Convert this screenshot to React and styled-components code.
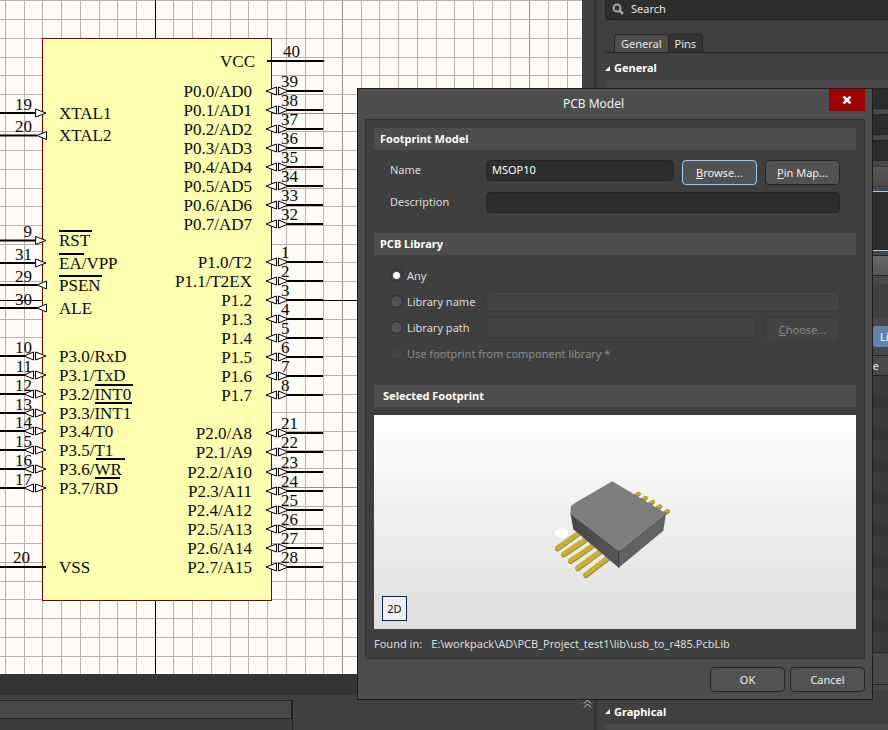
import React from "react";
import styled, { createGlobalStyle, css } from "styled-components";

const Global = createGlobalStyle`
  *, *::before, *::after { box-sizing: border-box; }
  body { margin: 0; background: #404040; }
  body, button, input { font-family: "Noto Sans", "Open Sans", sans-serif; font-size: 11px; line-height: 16px; color: #e6e6e6; }
`;

/* ---------- application frame ---------- */

const Frame = styled.div`
  position: relative;
  display: grid;
  grid-template-columns: minmax(0, 1fr) 12px 294px;
  height: 100vh;
  overflow: hidden;
  background: #404040;
`;

const Workspace = styled.main`
  display: flex;
  flex-direction: column;
  min-width: 0;
  min-height: 0;
`;

const Sheet = styled.svg`
  flex: 1;
  min-height: 0;
  width: 100%;
  display: block;
  background: #fffcf7;
`;

const StatusStrip = styled.div`
  flex: none;
  height: 21px;
  background: #343434;
`;

const DockArea = styled.div`
  flex: none;
  padding-top: 5px;
  height: 35px;
`;

const DockPanel = styled.div`
  width: 293px;
  height: 100%;
  border-right: 1px solid #222;
  background: #3c3c3c;
`;

const DockHeader = styled.div`
  height: 19px;
  border: 1px solid #222;
  border-left: 0;
  background: #484848;
`;

const Gutter = styled.div`
  display: flex;
  flex-direction: column;
  justify-content: flex-end;
  align-items: flex-start;
  padding-bottom: 21px;
`;

const Expand = styled.button`
  display: flex;
  width: 11px;
  height: 11px;
  padding: 1px;
  border: 0;
  background: none;
`;

/* ---------- properties panel ---------- */

const Side = styled.aside`
  display: flex;
  flex-direction: column;
  border-left: 3px solid #353535;
  padding-left: 8px;
  overflow: hidden;
`;

const SearchBox = styled.label`
  flex: none;
  display: flex;
  align-items: center;
  gap: 7px;
  height: 20px;
  padding: 0 6px 2px;
  border: 1px solid #222;
  border-width: 0 0 1px 1px;
  border-radius: 0 0 0 4px;
  background: #2d2d2d;
`;

const SearchInput = styled.input`
  flex: 1;
  min-width: 0;
  padding: 0;
  border: 0;
  background: none;
  outline: 0;
  &::placeholder { color: #e6e6e6; opacity: 1; }
`;

const Tabs = styled.div`
  flex: none;
  display: flex;
  margin-top: 14px;
  padding-left: 9px;
  border-bottom: 1px solid #252525;
`;

const Tab = styled.button`
  height: 18px;
  padding: 0 6px;
  border: 1px solid #252525;
  border-bottom: 0;
  border-radius: 4px 4px 0 0;
  background: ${(p) => (p.$active ? "#4d4d4d" : "#343434")};
  & + & { margin-left: -1px; }
`;

const GroupTitle = styled.h2`
  flex: none;
  display: flex;
  align-items: center;
  gap: 4px;
  height: ${(p) => p.$height}px;
  margin: 0;
  padding-top: ${(p) => p.$top || 0}px;
  font-size: 11px;
  font-weight: 700;
  color: #fff;
`;

const GroupBody = styled.div`
  flex: none;
  display: flex;
  flex-direction: column;
  background: #484848;
  border-radius: 4px 0 0 0;
`;

const Fields = styled.div`
  display: flex;
  flex-direction: column;
  gap: 5px;
  padding: 8px 0;
`;

const well = css`
  border: 1px solid #252525;
  background: #2d2d2d;
  outline: 0;
`;

const SideInput = styled.input`
  ${well}
  border-right: 0;
  height: 21px;
  width: 100%;
`;

const SideButton = styled.button`
  height: 21px;
  border: 1px solid ${(p) => (p.$raised ? "#252525" : "#383838")};
  border-right: 0;
  background: linear-gradient(${(p) => (p.$raised ? "#686868, #555" : "#565656, #4c4c4c")});
`;

const SideNote = styled.textarea`
  display: block;
  height: 60px;
  margin: -1px 0;
  border: 1px solid #9ccaff;
  border-right: 0;
  background: #2d2d2d;
  resize: none;
  outline: 0;
`;

const SideGap = styled.div`
  height: 33px;
  background: #404040;
`;

const Actions = styled.div`
  display: flex;
  justify-content: flex-end;
  padding: 9px 0 8px;
`;

const LibraryButton = styled.button`
  flex: 0 0 16px;
  height: 21px;
  padding: 0 0 0 8px;
  border: 0;
  border-radius: 4px 0 0 4px;
  background: #5f83aa;
  color: #fff;
  overflow: hidden;
  text-align: left;
`;

const ModelTable = styled.table`
  width: 100%;
  border-spacing: 0;
  th {
    height: 21px;
    padding: 0 9px 0 0;
    border: solid #222;
    border-width: 1px 0;
    font-weight: 400;
    text-align: right;
  }
  td { height: 20px; padding: 0; background: #3b3b3b; }
  tr:nth-child(even) td { background: #343434; height: 12px; }
`;

const TableFooter = styled.div`
  height: 33px;
  margin-bottom: 6px;
  border: solid #222;
  border-width: 1px 0;
`;

/* ---------- dialog ---------- */

const Dialog = styled.section`
  position: absolute;
  top: 88px;
  right: 15px;
  width: min(516px, calc(100% - 30px));
  border: 1px solid #1d1d1d;
  background: #4d4d4d;
`;

const TitleBar = styled.header`
  display: grid;
  grid-template-columns: 1fr 36px;
  height: 30px;
  padding-right: 7px;
`;

const Title = styled.h1`
  margin: 0;
  font-size: 12px;
  font-weight: 400;
  line-height: 30px;
  text-align: center;
  color: #f0f0f0;
`;

const CloseButton = styled.button`
  display: flex;
  align-items: center;
  justify-content: center;
  height: 22px;
  padding: 0;
  border: 0;
  background: #a00000;
`;

const Content = styled.div`
  margin: 0 7px;
  padding: 8px 8px 6px;
  border: 1px solid #323232;
  background: #3f3f3f;
`;

const SectionTitle = styled.h2`
  margin: 0;
  padding: 0 ${(p) => (p.$indent ? 9 : 6)}px;
  background: #4d4d4d;
  font-size: 11px;
  font-weight: 700;
  line-height: 22px;
  color: #fff;
`;

const Form = styled.div`
  display: flex;
  flex-direction: column;
  gap: ${(p) => p.$gap}px;
  padding: 10px 16px ${(p) => p.$bottom}px;
`;

const Row = styled.div`
  display: flex;
  gap: 8px;
  height: ${(p) => p.$height || 21}px;
`;

const Caption = styled.label`
  flex: none;
  display: flex;
  align-items: center;
  gap: 4px;
  width: ${(p) => (p.$wide ? "auto" : "88px")};
  height: ${(p) => (p.$field ? 19 : 21)}px;
  color: ${(p) => (p.$disabled ? "#8d8d8d" : "#dcdcdc")};
  white-space: nowrap;
`;

const TextField = styled.input`
  ${well}
  flex: 1;
  min-width: 0;
  height: 21px;
  padding: 0 5px 2px;
  border-radius: 4px;
  color: #fff;
  &:disabled { background: #434343; border-color: #393939; }
`;

const Radio = styled.input`
  appearance: none;
  width: 13px;
  height: 13px;
  margin: 0;
  border: 1px solid #2a2a2a;
  border-radius: 50%;
  background: #525252;
  &:checked { background: radial-gradient(circle, #fff 0 3px, #4a4a4a 4px); }
  &:disabled { background: #434343; border-color: #3c3c3c; }
`;

const Button = styled.button`
  flex: none;
  width: 75px;
  height: 25px;
  padding: 0;
  border: 1px solid ${(p) => (p.$focus ? "#9ccaff" : "#252525")};
  border-radius: 4px;
  background: #525252;
  color: #f0f0f0;
  &:disabled { background: #434343; border-color: #3b3b3b; color: #888; }
`;

const Preview = styled.div`
  position: relative;
  margin-top: 8px;
  background: linear-gradient(#fff, #dedede);
`;

const Model = styled.svg`
  display: block;
  width: 100%;
`;

const ViewToggle = styled.button`
  position: absolute;
  left: 8px;
  bottom: 8px;
  width: 25px;
  height: 25px;
  padding: 0;
  border: 1px solid #0a246a;
  background: #f0f0f0;
  color: #111;
`;

const FoundIn = styled.p`
  display: flex;
  gap: 9px;
  margin: 7px 0 0;
  color: #dcdcdc;
`;

const Footer = styled.footer`
  display: flex;
  justify-content: flex-end;
  gap: 5px;
  padding: 8px 7px 7px;
`;

/* ---------- schematic ---------- */

const PinText = styled.text`
  font-family: "Liberation Serif", serif;
  font-size: 17px;
  fill: #0a0a0a;
  text-anchor: ${(p) => p.$anchor || "start"};
`;

const PITCH = 18.72;
const columns = Array.from({ length: 60 }, (_, k) => ({ at: Math.floor(5.5 + PITCH * k) + 0.5, major: k % 10 === 8 }));
const rows = Array.from({ length: 37 }, (_, k) => ({ at: Math.floor(0.9 + PITCH * k) + 0.5, major: k % 10 === 6 }));

const bus = (names, numbers, start, step) =>
  names.map((name, i) => ({ name, number: numbers[i], y: Math.round(start + step * i) }));

const rightPins = [
  ...bus(["P0.0/AD0", "P0.1/AD1", "P0.2/AD2", "P0.3/AD3", "P0.4/AD4", "P0.5/AD5", "P0.6/AD6", "P0.7/AD7"], [39, 38, 37, 36, 35, 34, 33, 32], 91, 19.05),
  ...bus(["P1.0/T2", "P1.1/T2EX", "P1.2", "P1.3", "P1.4", "P1.5", "P1.6", "P1.7"], [1, 2, 3, 4, 5, 6, 7, 8], 262, 19.05),
  ...bus(["P2.0/A8", "P2.1/A9", "P2.2/A10", "P2.3/A11", "P2.4/A12", "P2.5/A13", "P2.6/A14", "P2.7/A15"], [21, 22, 23, 24, 25, 26, 27, 28], 433.4, 19.05),
];

const leftPins = [
  { name: "XTAL1", number: 19, y: 113, kind: "in" },
  { name: "XTAL2", number: 20, y: 135.5, kind: "out" },
  { name: "RST", number: 9, y: 240.5, kind: "in", bar: [59, 92, 231] },
  { name: "EA/VPP", number: 31, y: 263, kind: "in", bar: [59, 84, 254] },
  { name: "PSEN", number: 29, y: 285, kind: "out", bar: [59, 102, 276] },
  { name: "ALE", number: 30, y: 308, kind: "out" },
  ...bus(
    ["P3.0/RxD", "P3.1/TxD", "P3.2/INT0", "P3.3/INT1", "P3.4/T0", "P3.5/T1", "P3.6/WR", "P3.7/RD"],
    [10, 11, 12, 13, 14, 15, 16, 17], 356.4, 18.75
  ).map((p, i) => ({ ...p, kind: "io", bar: { 2: [95, 133, 385], 3: [95, 132, 403], 6: [96, 125, 459], 7: [95, 120, 478] }[i] })),
];

const Arrow = ({ tip, base, y }) => (
  <path d={`M${tip} ${y}L${base} ${y - 4}V${y + 4}Z`} fill="#fffcf7" stroke="#000" />
);

function Schematic() {
  return (
    <Sheet viewBox="0 0 582 674" preserveAspectRatio="xMinYMin slice" role="img" aria-label="Schematic symbol">
      <g strokeWidth="1">
        {columns.map((c) => <path key={c.at} d={`M${c.at} 0V674`} stroke={c.major ? "#9b8f87" : "#bdb0a9"} />)}
        {rows.map((r) => <path key={r.at} d={`M0 ${r.at}H1200`} stroke={r.major ? "#9b8f87" : "#bdb0a9"} />)}
        <path d="M155.5 0V674M0 300.5H582" stroke="#000" />
      </g>
      <rect x="42.5" y="38.5" width="229" height="562" fill="#ffffb0" stroke="#800000" />
      <path d="M267 61H324M0 567H46" stroke="#000" strokeWidth="2" />
      <PinText x="255" y="67" $anchor="end">VCC</PinText>
      <PinText x="283" y="57">40</PinText>
      <PinText x="59" y="573">VSS</PinText>
      <PinText x="13" y="563">20</PinText>
      {rightPins.map((p) => (
        <g key={p.name}>
          <path d={`M287 ${p.y}H323`} stroke="#000" strokeWidth="2" />
          <Arrow tip={266} base={276.5} y={p.y} />
          <Arrow tip={288} base={278.5} y={p.y} />
          <PinText x="252" y={p.y + 6} $anchor="end">{p.name}</PinText>
          <PinText x="281" y={p.y - 4}>{p.number}</PinText>
        </g>
      ))}
      {leftPins.map((p) => (
        <g key={p.name}>
          <path d={`M0 ${p.y}H${p.kind === "io" ? 25 : 37}`} stroke="#000" strokeWidth="2" />
          {p.kind === "io" && <Arrow tip={24} base={33.5} y={p.y} />}
          {p.kind === "out" ? <Arrow tip={37} base={46.5} y={p.y} /> : <Arrow tip={46} base={35.5} y={p.y} />}
          <PinText x="59" y={Math.floor(p.y) + 6}>{p.name}</PinText>
          <PinText x="32" y={Math.floor(p.y) - 3} $anchor="end">{p.number}</PinText>
          {p.bar && <path d={`M${p.bar[0]} ${p.bar[2]}H${p.bar[1]}`} stroke="#000" strokeWidth="2" />}
        </g>
      ))}
    </Sheet>
  );
}

function Chip() {
  const front = [[82, 267, 142, 224], [100, 285, 164, 242], [121, 305, 186, 260], [143, 326, 208, 278], [167, 347, 234, 295]];
  const back = [[324, 102], [345, 114], [367, 126], [388, 140], [411, 154]];
  return (
    <Model viewBox="0 0 482 214" role="img" aria-label="MSOP10 package">
      <defs>
        <linearGradient id="sideLeft" x2="1" y2="0.5">
          <stop stopColor="#454545" />
          <stop offset="1" stopColor="#555" />
        </linearGradient>
      </defs>
      <g transform="translate(156 45) scale(0.3333)">
        <ellipse cx="95" cy="220" rx="20" ry="15" fill="#fff" />
        {front.map(([x1, y1, x2, y2]) => (
          <g key={x1} strokeLinecap="round" strokeWidth="16">
            <path d={`M${x1 + 1} ${y1 - 1}L${x2} ${y2}`} stroke="#9a861f" />
            <path d={`M${x1} ${y1 - 3}L${x2} ${y2 - 2}`} stroke="#c6b035" strokeWidth="14" />
          </g>
        ))}
        {back.map(([x, y]) => (
          <g key={x} strokeLinecap="round">
            <path d={`M${x - 6} ${y + 5}L${x + 2} ${y}`} stroke="#8d7a1c" strokeWidth="13" />
            <path d={`M${x - 3} ${y}L${x + 3} ${y - 1}`} stroke="#c5ac2d" strokeWidth="9" />
          </g>
        ))}
        <path d="M121 160L266 272V323L130 208Z" fill="url(#sideLeft)" />
        <path d="M266 272L408 160L400 212L266 323Z" fill="#626262" />
        <path d="M247 64L408 160L266 272L121 162L123 138L136 128Z" fill="#7d7d7d" />
        <path d="M266 272V323" stroke="#333" strokeWidth="3" />
      </g>
    </Model>
  );
}

const Collapse = () => (
  <svg width="5" height="5" viewBox="0 0 5 5" aria-hidden="true"><path d="M5 0V5H0Z" fill="#fff" /></svg>
);

function Properties() {
  return (
    <Side>
      <SearchBox>
        <svg width="12" height="12" viewBox="0 0 12 12" fill="none" stroke="#a6a6a6" aria-hidden="true">
          <circle cx="5" cy="5" r="3.5" strokeWidth="2" />
          <path d="M7.5 7.5L11 11" strokeWidth="2.5" />
        </svg>
        <SearchInput placeholder="Search" aria-label="Search" />
      </SearchBox>
      <Tabs role="tablist">
        <Tab role="tab" aria-selected="true" $active>General</Tab>
        <Tab role="tab" aria-selected="false">Pins</Tab>
      </Tabs>
      <GroupTitle $height={27} $top={3}><Collapse />General</GroupTitle>
      <GroupBody>
        <Fields>
          <SideInput aria-label="Designator" />
          <SideInput aria-label="Comment" />
          <SideInput aria-label="Part" />
          <SideButton aria-label="Previous part" />
          <SideNote aria-label="Notes" />
          <SideButton aria-label="Type" $raised />
        </Fields>
        <SideGap />
        <Actions><LibraryButton>Li</LibraryButton></Actions>
        <ModelTable>
          <thead><tr><th>e</th></tr></thead>
          <tbody>
            {Array.from({ length: 17 }, (_, i) => <tr key={i}><td /></tr>)}
          </tbody>
        </ModelTable>
        <TableFooter />
      </GroupBody>
      <GroupTitle $height={33} $top={8}><Collapse />Graphical</GroupTitle>
      <GroupBody><Fields /></GroupBody>
    </Side>
  );
}

function PcbModelDialog() {
  return (
    <Dialog role="dialog" aria-labelledby="dialog-title">
      <TitleBar>
        <Title id="dialog-title">PCB Model</Title>
        <CloseButton aria-label="Close">
          <svg width="10" height="8" viewBox="0 0 10 8" aria-hidden="true">
            <path d="M1.5 0.5L8.5 7.5M8.5 0.5L1.5 7.5" stroke="#fff" strokeWidth="2.5" />
          </svg>
        </CloseButton>
      </TitleBar>
      <Content>
        <SectionTitle>Footprint Model</SectionTitle>
        <Form $gap={7} $bottom={20}>
          <Row $height={25}>
            <Caption htmlFor="name" $field>Name</Caption>
            <TextField id="name" defaultValue="MSOP10" />
            <Button $focus><u>B</u>rowse...</Button>
            <Button><u>P</u>in Map...</Button>
          </Row>
          <Row>
            <Caption htmlFor="description" $field>Description</Caption>
            <TextField id="description" />
          </Row>
        </Form>
        <SectionTitle>PCB Library</SectionTitle>
        <Form $gap={5} $bottom={21}>
          <Row>
            <Caption><Radio type="radio" name="library" defaultChecked />Any</Caption>
          </Row>
          <Row>
            <Caption><Radio type="radio" name="library" />Library name</Caption>
            <TextField disabled aria-label="Library name" />
          </Row>
          <Row>
            <Caption><Radio type="radio" name="library" />Library path</Caption>
            <TextField disabled aria-label="Library path" />
            <Button disabled><u>C</u>hoose...</Button>
          </Row>
          <Row>
            <Caption $wide $disabled><Radio type="radio" name="library" disabled />Use footprint from component library *</Caption>
          </Row>
        </Form>
        <SectionTitle $indent>Selected Footprint</SectionTitle>
        <Preview>
          <Chip />
          <ViewToggle>2D</ViewToggle>
        </Preview>
        <FoundIn><span>Found in:</span><span>E:\workpack\AD\PCB_Project_test1\lib\usb_to_r485.PcbLib</span></FoundIn>
      </Content>
      <Footer>
        <Button>OK</Button>
        <Button>Cancel</Button>
      </Footer>
    </Dialog>
  );
}

export default function App() {
  return (
    <>
      <Global />
      <Frame>
        <Workspace>
          <Schematic />
          <StatusStrip />
          <DockArea>
            <DockPanel><DockHeader /></DockPanel>
          </DockArea>
        </Workspace>
        <Gutter>
          <Expand aria-label="Expand">
            <svg width="9" height="9" viewBox="0 0 9 9" fill="none" stroke="#ccc" aria-hidden="true">
              <path d="M1 4.5L4.5 1L8 4.5M1 8.5L4.5 5L8 8.5" />
            </svg>
          </Expand>
        </Gutter>
        <Properties />
        <PcbModelDialog />
      </Frame>
    </>
  );
}
